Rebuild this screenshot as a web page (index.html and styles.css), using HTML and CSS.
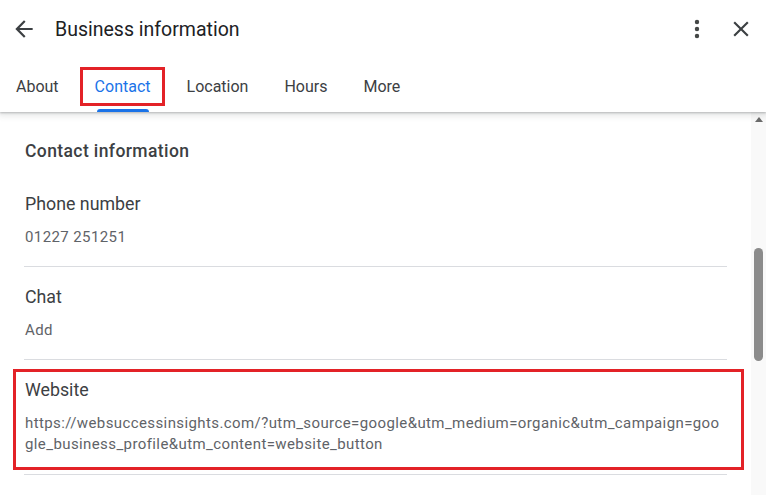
FILE: index.html
```html
<!DOCTYPE html>
<html lang="en">
<head>
<meta charset="utf-8">
<title>Business information</title>
<link rel="stylesheet" href="styles.css">
</head>
<body>
<div class="dialog">
  <header class="head">
    <div class="appbar">
      <button class="icon-btn back" aria-label="Back">
        <svg viewBox="0 0 24 24" width="26" height="26"><path d="M20 11H7.83l5.59-5.59L12 4l-8 8 8 8 1.41-1.41L7.83 13H20v-2z"/></svg>
      </button>
      <h1 class="title">Business information</h1>
      <button class="icon-btn more" aria-label="More options">
        <svg viewBox="0 0 24 24" width="28" height="28"><circle cx="12" cy="6" r="1.9"/><circle cx="12" cy="12" r="1.9"/><circle cx="12" cy="18" r="1.9"/></svg>
      </button>
      <button class="icon-btn close" aria-label="Close">
        <svg viewBox="0 0 24 24" width="26" height="26"><path d="M19 6.41 17.59 5 12 10.59 6.41 5 5 6.41 10.59 12 5 17.59 6.41 19 12 13.41 17.59 19 19 17.59 13.41 12z"/></svg>
      </button>
    </div>
    <nav class="tabs">
      <span class="tab">About</span>
      <span class="tab active marked">Contact</span>
      <span class="tab">Location</span>
      <span class="tab">Hours</span>
      <span class="tab">More</span>
    </nav>
  </header>
  <div class="body">
    <main class="content">
      <h2 class="heading">Contact information</h2>
      <section class="field">
        <div class="label">Phone number</div>
        <div class="value">01227 251251</div>
      </section>
      <section class="field">
        <div class="label">Chat</div>
        <div class="value">Add</div>
      </section>
      <section class="field marked">
        <div class="label">Website</div>
        <div class="value url">https://websuccessinsights.com/?utm_source=google&amp;utm_medium=organic&amp;utm_campaign=google_business_profile&amp;utm_content=website_button</div>
      </section>
    </main>
    <div class="scrollbar">
      <span class="arrow"></span>
      <span class="thumb"></span>
    </div>
  </div>
</div>
</body>
</html>
```
FILE: styles.css
```css
* { box-sizing: border-box; }

html, body {
  margin: 0;
  height: 100%;
  background: #fff;
}

body {
  font-family: Roboto, "Liberation Sans", Arial, sans-serif;
  color: #3c4043;
  overflow: hidden;
}

.dialog {
  display: flex;
  flex-direction: column;
  height: 100%;
}

/* ---------- header ---------- */
.head {
  position: relative;
  z-index: 2;
  background: #fff;
  box-shadow: 0 1px 2px rgba(60, 64, 67, .3), 0 2px 6px 2px rgba(60, 64, 67, .12);
}

.appbar {
  display: flex;
  align-items: center;
  height: 58px;
  padding: 0 10px 0 9px;
}

.icon-btn {
  display: flex;
  align-items: center;
  justify-content: center;
  width: 30px;
  height: 30px;
  padding: 0;
  border: 0;
  background: none;
  fill: #3c4043;
}

.title {
  flex: 1;
  margin: 0 0 0 16px;
  font-size: 19.5px;
  font-weight: 400;
  color: #202124;
}

.more { margin-right: 14px; }
.more svg { fill: #444746; }

.tabs {
  display: flex;
  gap: 36px;
  height: 54px;
  padding: 2px 0 0 16px;
}

.tab {
  position: relative;
  display: flex;
  align-items: center;
  font-size: 16px;
  font-weight: 400;
  color: #3c4043;
}

.tab.active { color: #1a73e8; }

.tab.active::after {
  content: "";
  position: absolute;
  left: 2px;
  right: 2px;
  bottom: 0;
  height: 3px;
  border-radius: 3px 3px 0 0;
  background: #1a73e8;
}

/* red call-out frames */
.tab.marked::before {
  content: "";
  position: absolute;
  top: 7px;
  bottom: 6px;
  left: -15px;
  right: -14px;
  border: 3px solid #e32227;
}

/* ---------- body ---------- */
.body {
  flex: 1;
  display: flex;
  min-height: 0;
}

.content {
  flex: 1;
  padding: 27px 24px 0 24px;
}

.heading {
  margin: 0 0 11px 1px;
  font-size: 17.5px;
  line-height: 24px;
  font-weight: 500;
  letter-spacing: .4px;
  color: #3c4043;
}

.field {
  position: relative;
  padding: 18px 0 19px 1px;
  border-bottom: 1px solid #dadce0;
}

.label {
  font-size: 17.8px;
  line-height: 24px;
  color: #3c4043;
}

.value {
  margin-top: 11px;
  font-size: 15px;
  line-height: 20px;
  color: #5f6368;
  letter-spacing: .4px;
}

.url {
  line-height: 21px;
  word-break: break-all;
}

.field.marked::before {
  content: "";
  position: absolute;
  top: 9px;
  bottom: 4px;
  left: -11px;
  right: -17px;
  border: 3px solid #e32227;
}

/* ---------- scrollbar ---------- */
.scrollbar {
  flex: 0 0 15px;
  display: flex;
  flex-direction: column;
  align-items: center;
  background: #f9f9f9;
}

.arrow {
  margin-top: 5px;
  width: 0;
  height: 0;
  border-left: 4px solid transparent;
  border-right: 4px solid transparent;
  border-bottom: 5px solid #6b6b6b;
}

.thumb {
  margin-top: 126px;
  width: 9px;
  height: 113px;
  border-radius: 5px;
  background: #8b8b8b;
}
```
